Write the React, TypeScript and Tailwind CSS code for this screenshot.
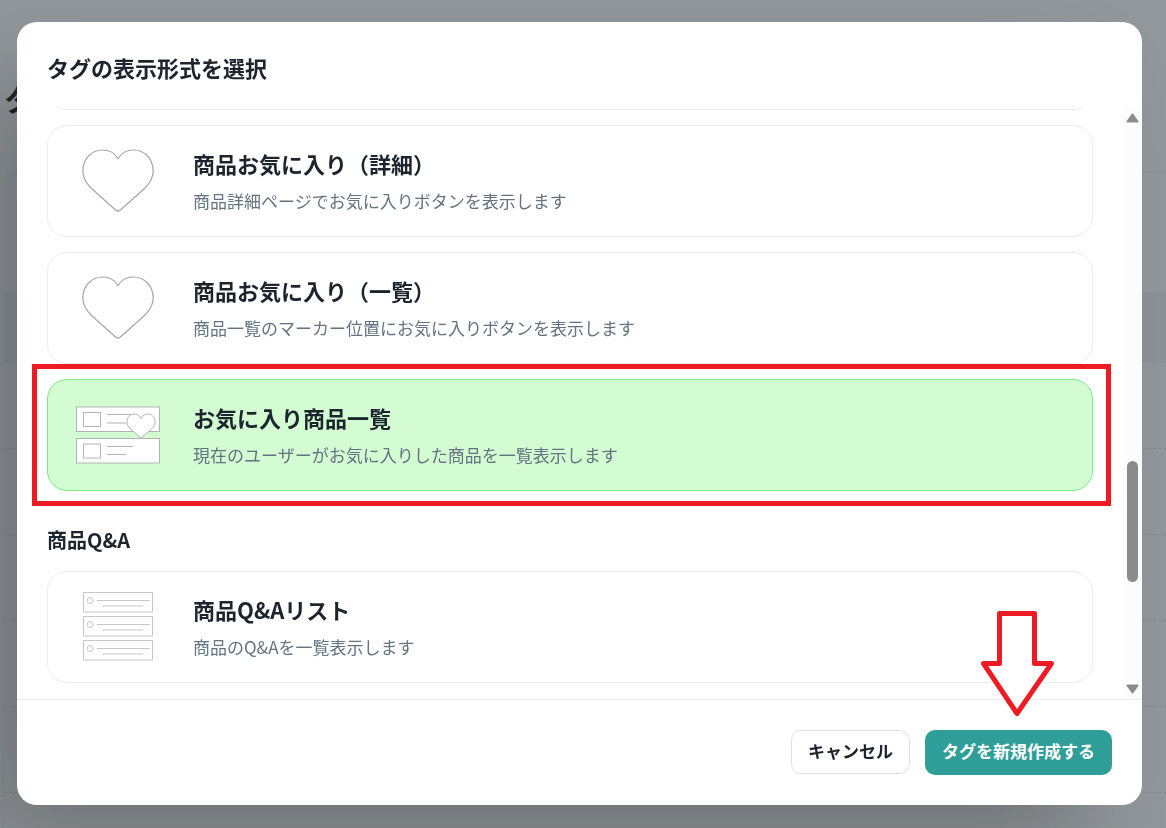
import { useState } from 'react'
import type { ReactNode } from 'react'

function HeartIcon() {
  return (
    <svg width="72" height="64" viewBox="0 0 72 64" fill="white" stroke="#a6a6a6" strokeWidth="1.2">
      <path d="M36 9.5C32.500 3.500 26.500 1 20.500 1C9.500 1 0.800 10 0.800 22C0.800 29 4.500 34.500 9.500 39.500L33 60.500Q36 63.500 39 60.500L62.500 39.500C67.500 34.500 71.200 29 71.200 22C71.200 10 62.500 1 51.500 1C45.500 1 39.500 3.500 36 9.500Z" />
    </svg>
  )
}

function FavoriteListIcon() {
  return (
    <svg width="84" height="58" viewBox="0 0 84 58" fill="white" stroke="#b3b3b3" strokeWidth="1">
      <rect x="0.5" y="1" width="83" height="24.500" />
      <rect x="7.5" y="6.500" width="17" height="14" />
      <path d="M31 8.500H56M31 17H50" />
      <rect x="0.5" y="32.500" width="83" height="24.500" />
      <rect x="7.5" y="38" width="17" height="14" />
      <path d="M31 40.500H57M31 48.500H50" />
      <path d="M65 12.300C63 9 60.500 8 58.500 8C54 8 51 11.500 51 16C51 19 52.500 21 54.500 23L65 32L75.500 23C77.500 21 79 19 79 16C79 11.500 76 8 71.500 8C69.500 8 67 9 65 12.300Z" />
    </svg>
  )
}

function QaListIcon() {
  return (
    <svg width="70" height="70" viewBox="0 0 70 70" fill="white" stroke="#c6c6c6" strokeWidth="1">
      {[0, 24, 48].map((y) => (
        <g key={y}>
          <rect x="0.500" y={y + 0.5} width="69" height="19.500" />
          <circle cx="7" cy={y + 8.5} r="3" />
          <path d={`M14 ${y + 8.5}H67M19 ${y + 14}H60`} />
        </g>
      ))}
    </svg>
  )
}

type CardProps = {
  icon: ReactNode
  title: string
  description: string
  selected: boolean
  onSelect: () => void
}

function FormatCard({ icon, title, description, selected, onSelect }: CardProps) {
  return (
    <button
      type="button"
      aria-pressed={selected}
      onClick={onSelect}
      className={`flex min-h-28 w-full shrink-0 items-center gap-[30px] rounded-[20px] border px-[25px] text-left ${
        selected ? 'border-[#77ed8b] bg-[#d3fcd2]' : 'border-[#ebecee] bg-white'
      }`}
    >
      <span className="flex w-[90px] shrink-0 justify-center">{icon}</span>
      <span className="flex flex-col gap-1.5 pb-0.5">
        <span className="text-[22px] leading-9 font-bold text-[#1c252e]">{title}</span>
        <span className="text-[17px] leading-7 text-[#637381]">{description}</span>
      </span>
    </button>
  )
}

function Scrollbar() {
  return (
    <div className="flex w-[19px] shrink-0 flex-col items-center bg-[#fcfcfc] pt-[6px] pb-[5px]">
      <svg width="13" height="10" viewBox="0 0 13 10" fill="#8b8b8b" stroke="#8b8b8b" strokeWidth="2" strokeLinejoin="round">
        <path d="M6.500 1.500L11.500 8.500H1.500Z" />
      </svg>
      <div className="grow-[338]" />
      <div className="h-[121px] w-[11px] rounded-full bg-[#8b8b8b]" />
      <div className="grow-[102]" />
      <svg width="13" height="10" viewBox="0 0 13 10" fill="#8b8b8b" stroke="#8b8b8b" strokeWidth="2" strokeLinejoin="round">
        <path d="M6.500 8.500L11.500 1.500H1.500Z" />
      </svg>
    </div>
  )
}

function DownArrow() {
  return (
    <svg
      className="pointer-events-none absolute bottom-full left-1/2 mb-3 -translate-x-1/2"
      width="76"
      height="108"
      viewBox="0 0 76 108"
      fill="white"
      stroke="#ed1c24"
      strokeWidth="5"
      strokeLinejoin="round"
    >
      <path d="M18.500 3.500H53.500V53.500H70.500L36 103.500L2.500 53.500H18.500Z" />
    </svg>
  )
}

export default function App() {
  const [selected, setSelected] = useState('favorite-items')

  return (
    <div className="h-screen overflow-hidden bg-white font-['Noto_Sans_CJK_JP',sans-serif] text-[#1c252e]">
      {/* Page behind the dialog */}
      <main className="pt-[78px] pl-1">
        <h1 className="text-[30px] leading-10 font-bold">タグ</h1>
        <div className="mt-[55px] rounded-l-[20px] bg-white shadow-[0_0_3px_rgba(145,158,171,0.3)]">
          <div className="h-[119px]" />
          <div className="h-[71px] bg-[#f4f6f8]" />
          {[1, 2, 3, 4, 5, 6].map((row) => (
            <div key={row} className="h-[86px] border-b border-dashed border-[#dfe3e8]" />
          ))}
        </div>
      </main>

      {/* Dialog */}
      <div className="fixed inset-0 flex bg-[#1c252e]/48 pt-[22px] pr-6 pb-[23px] pl-[17px]">
        <div
          role="dialog"
          aria-labelledby="dialog-title"
          className="flex min-w-0 flex-1 flex-col rounded-[20px] bg-white shadow-[-50px_50px_100px_-10px_rgba(0,0,0,0.24)]"
        >
          <h2 id="dialog-title" className="px-[30px] pt-[27px] pb-[22px] text-[22px] leading-9 font-bold">
            タグの表示形式を選択
          </h2>

          <div className="flex min-h-0 flex-1">
            <div className="flex min-w-0 flex-1 flex-col justify-end gap-[15px] overflow-hidden px-[30px] pb-4">
              <div className="h-28 shrink-0 rounded-[20px] border border-[#ebecee]" />
              <FormatCard
                icon={<HeartIcon />}
                title="商品お気に入り（詳細）"
                description="商品詳細ページでお気に入りボタンを表示します"
                selected={selected === 'favorite-detail'}
                onSelect={() => setSelected('favorite-detail')}
              />
              <FormatCard
                icon={<HeartIcon />}
                title="商品お気に入り（一覧）"
                description="商品一覧のマーカー位置にお気に入りボタンを表示します"
                selected={selected === 'favorite-list'}
                onSelect={() => setSelected('favorite-list')}
              />
              <div className="relative shrink-0">
                <FormatCard
                  icon={<FavoriteListIcon />}
                  title="お気に入り商品一覧"
                  description="現在のユーザーがお気に入りした商品を一覧表示します"
                  selected={selected === 'favorite-items'}
                  onSelect={() => setSelected('favorite-items')}
                />
                <div className="pointer-events-none absolute -inset-y-[15px] -right-[18px] -left-[15px] border-5 border-[#ed1c24]" />
              </div>
              <h3 className="mt-[18px] shrink-0 text-xl leading-8 font-bold">商品Q&amp;A</h3>
              <FormatCard
                icon={<QaListIcon />}
                title="商品Q&Aリスト"
                description="商品のQ&Aを一覧表示します"
                selected={selected === 'qa-list'}
                onSelect={() => setSelected('qa-list')}
              />
            </div>
            <Scrollbar />
          </div>

          <div className="flex items-start justify-end gap-[15px] border-t border-[#e9ebed] p-[30px]">
            <button type="button" className="h-11 rounded-[10px] border border-[#dfe3e8] px-4 pb-0.5 text-[17px] font-bold">
              キャンセル
            </button>
            <div className="relative">
              <button type="button" className="h-[45px] rounded-[10px] bg-[#2f9e99] px-[17px] pb-[3px] text-[17px] font-bold text-white">
                タグを新規作成する
              </button>
              <DownArrow />
            </div>
          </div>
        </div>
      </div>
    </div>
  )
}
